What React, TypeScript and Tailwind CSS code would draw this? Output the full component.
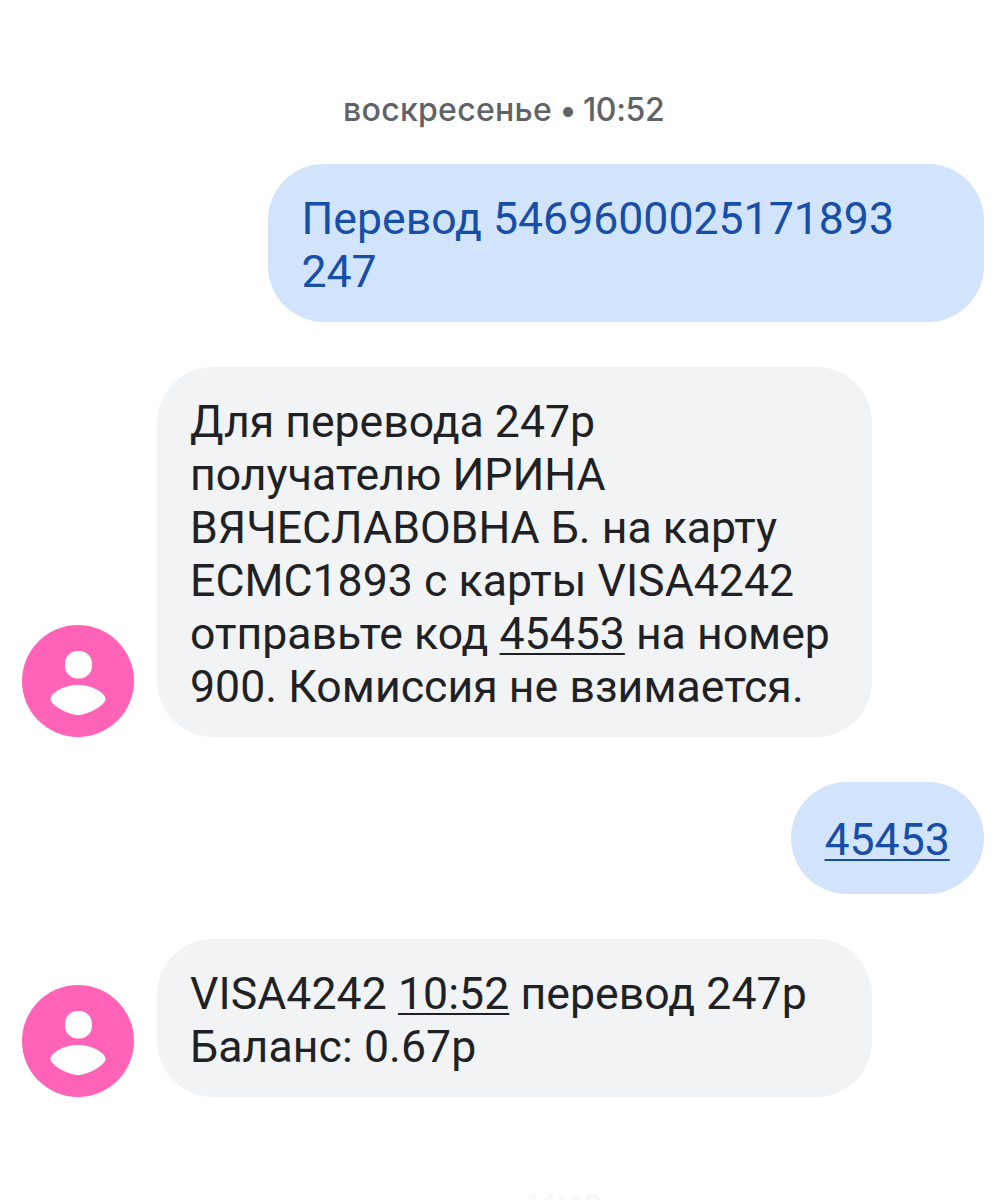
import type { ReactNode } from "react";

function Avatar() {
  return (
    <svg className="h-28 w-28 shrink-0" viewBox="0 0 112 112" aria-hidden="true">
      <circle cx="56" cy="56" r="56" fill="#ff63b8" />
      <rect x="43" y="26" width="27" height="27.5" rx="12.5" fill="#fff" />
      <path d="M56 60C70 60 83.5 68 83.5 74C83.5 80 66 90 56 90C46 90 28.5 80 28.5 74C28.5 68 42 60 56 60Z" fill="#fff" />
    </svg>
  );
}

function Code({ children }: { children: ReactNode }) {
  return <span className="underline decoration-[2px] underline-offset-[4px] [text-decoration-skip-ink:none]">{children}</span>;
}

function Incoming({ children }: { children: ReactNode }) {
  return (
    <div className="ml-[22px] flex items-end gap-[23px]">
      <Avatar />
      <div className="w-[715px] rounded-[56px] bg-[#f1f3f5] pt-[29px] pb-[23px] pl-[33px] text-[#202124]">{children}</div>
    </div>
  );
}

export default function App() {
  return (
    <main className="h-[1200px] w-[1006px] overflow-hidden bg-white font-['Roboto',sans-serif] text-[44.6px] leading-[53px] whitespace-nowrap">
      <div className="flex h-[164px] items-start pt-[90px] pl-[343px] font-['Inter',sans-serif] text-[32px] leading-[40px] font-medium text-[#5f6368]">
        <span className="tracking-[0.3px] [word-spacing:-1.5px]">воскресенье • </span>
        <span className="ml-[6px] tracking-[-0.3px]">10:52</span>
      </div>
      <div className="mr-[22px] ml-auto h-[158px] w-[716px] rounded-[56px] bg-[#d2e3fc] pt-[29px] pl-[33.5px] text-[#174ea6]">
        <div>Перевод 5469600025171893</div>
        <div>247</div>
      </div>
      <div className="h-[45px]" />
      <Incoming>
        <div>Для перевода 247р</div>
        <div>получателю ИРИНА</div>
        <div>ВЯЧЕСЛАВОВНА Б. на карту</div>
        <div className="tracking-[0.04px]">ЕСМС1893 с карты VISA4242</div>
        <div>отправьте код <Code>45453</Code> на номер</div>
        <div className="tracking-[0.04px]">900. Комиссия не взимается.</div>
      </Incoming>
      <div className="h-[45px]" />
      <div className="mr-[22px] ml-auto h-[112px] w-[193px] rounded-[56px] bg-[#d2e3fc] pt-[32px] pl-[33.5px] text-[#174ea6]">
        <Code>45453</Code>
      </div>
      <div className="h-[44.6px]" />
      <Incoming>
        <div className="tracking-[0.06px]">VISA4242 <Code>10:52</Code> перевод 247р</div>
        <div className="tracking-[0.08px]">Баланс: 0.67р</div>
      </Incoming>
      <div className="mt-[88px] ml-[527px] font-['Inter',sans-serif] text-[28px] leading-[40px] font-medium text-[#f8f8f8]">14:48</div>
    </main>
  );
}
